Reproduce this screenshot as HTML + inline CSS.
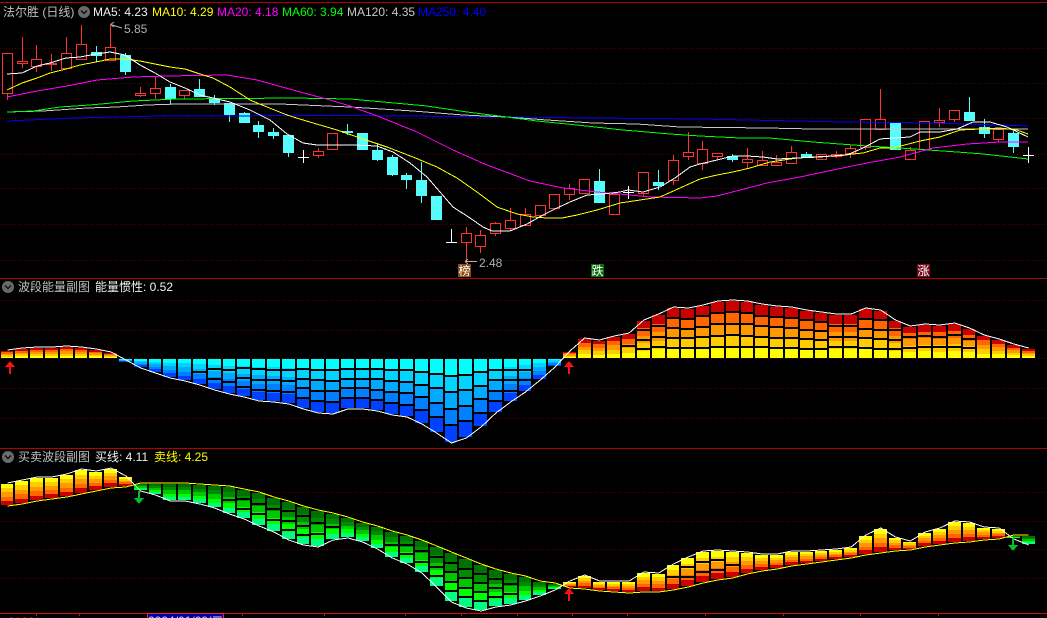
<!DOCTYPE html>
<html><head><meta charset="utf-8"><title>法尔胜</title>
<style>
html,body{margin:0;padding:0;background:#000;width:1047px;height:618px;overflow:hidden}
svg{display:block;position:absolute;left:0;top:0}
text{font-family:"Liberation Sans","Noto Sans CJK SC",sans-serif;font-size:12px}
</style></head><body>
<svg id="s" width="1047" height="618" viewBox="0 0 1047 618" xmlns="http://www.w3.org/2000/svg">
<g id="chart"></g>
<g>
<text x="3" y="16" fill="#c0c0c0">法尔胜 (日线)</text>
<circle cx="84" cy="12" r="6" fill="#6a6a6a"/><path d="M81 10.500L84 13.500L87 10.500" fill="none" stroke="#111" stroke-width="1.500"/>
<text x="93" y="16" fill="#f0f0f0">MA5: 4.23</text>
<text x="152" y="16" fill="#ffff00">MA10: 4.29</text>
<text x="217" y="16" fill="#ff00ff">MA20: 4.18</text>
<text x="282" y="16" fill="#00ff00">MA60: 3.94</text>
<text x="347" y="16" fill="#c8c8c8">MA120: 4.35</text>
<text x="418" y="16" fill="#0000ff">MA250: 4.40</text>
<text x="124" y="33" fill="#b0b0b0">5.85</text>
<path d="M110.500 24.500L122 28M110.500 24.500L114 22M110.500 24.500L114 27" fill="none" stroke="#b0b0b0"/>
<text x="479" y="267" fill="#b0b0b0">2.48</text>
<path d="M465 261.500L477 261.500M465 261.500L468 259M465 261.500L468 264" fill="none" stroke="#b0b0b0"/>
<rect x="458" y="264" width="13" height="13" fill="#8a4a10"/><text x="458.500" y="275" fill="#fff">榜</text>
<rect x="591" y="264" width="13" height="13" fill="#0a6a0a"/><text x="591.500" y="275" fill="#fff">跌</text>
<rect x="917" y="264" width="13" height="13" fill="#7a0a1a"/><text x="917.500" y="275" fill="#fff">涨</text>
<circle cx="8" cy="287" r="6" fill="#6a6a6a"/><path d="M5 285.500L8 288.500L11 285.500" fill="none" stroke="#111" stroke-width="1.500"/>
<text x="18" y="291" fill="#c0c0c0">波段能量副图</text>
<text x="95" y="291" fill="#f0f0f0">能量惯性: 0.52</text>
<circle cx="8" cy="457" r="6" fill="#6a6a6a"/><path d="M5 455.500L8 458.500L11 455.500" fill="none" stroke="#111" stroke-width="1.500"/>
<text x="18" y="461" fill="#c0c0c0">买卖波段副图</text>
<text x="95" y="461" fill="#f0f0f0">买线: 4.11</text>
<text x="154" y="461" fill="#ffff00">卖线: 4.25</text>
<rect x="147.500" y="613.500" width="76" height="8" fill="#0000a0" stroke="#ff2020"/>
<text x="148" y="625" fill="#d0d0ff">2024/01/09/二</text>
<text x="8" y="626" fill="#ff3030">2023/</text>
</g>
</svg>
<script>
var out=[];
function R(x,y,w,h,f){out.push('<rect x="'+x+'" y="'+y+'" width="'+w+'" height="'+h+'" fill="'+f+'"/>');}
function L(x1,y1,x2,y2,c){out.push('<line x1="'+x1+'" y1="'+y1+'" x2="'+x2+'" y2="'+y2+'" stroke="'+c+'"/>');}
function P(pts,c){out.push('<polyline points="'+pts+'" fill="none" stroke="'+c+'" stroke-width="1"/>');}
/* grids */
[48,83,118,154,188,224,260,300,330,358,388,418,492,521,549,578].forEach(function(y){
 out.push('<line x1="0" y1="'+(y+.5)+'" x2="1047" y2="'+(y+.5)+'" stroke="'+(y==83?'#3a1000':'#5a0000')+'" stroke-dasharray="1 2"/>');
});
[2,278,448].forEach(function(y){R(0,y,1047,1,'#b40000');});
R(0,613,1047,1,'#d01010');
[36,79,242,324,405,461,517,572,627,705,783,860,938].forEach(function(x){R(x,613,1,3,'#d01010');});
/* candles: type, top, bottom, wickTop, wickBot */
var c=[
'r',53,93,53,100,'r',61,63,37,68,'r',59,66,45,72,'r',63,64,54,71,'r',53,68,37,68,'r',44,59,25,59,'c',52,56,46,62,'r',47,60,25,60,
'c',55,72,53,75,'r',93,95,87,97,'r',88,93,77,99,'c',87,99,84,105,'r',90,95,90,99,'c',89,97,79,97,'c',99,103,95,105,'c',103,115,103,122,
'c',113,123,112,123,'c',125,132,121,138,'c',132,136,128,139,'c',135,153,135,157,'w',157,157,150,162,'r',151,155,148,158,'r',133,149,133,149,'c',131,133,124,135,
'c',133,150,133,150,'c',150,160,143,161,'c',157,175,155,176,'c',175,180,173,189,'c',180,196,162,203,'c',196,220,196,220,'w',242,242,229,242,'r',233,242,227,262,
'r',235,246,230,253,'r',223,233,222,236,'r',220,228,208,231,'r',214,225,208,225,'r',205,215,205,215,'r',194,208,194,208,'r',188,194,184,200,'r',179,193,179,193,
'c',181,203,169,203,'r',194,214,194,214,'w',192,192,186,198,'r',172,193,172,196,'c',182,186,170,190,'r',160,180,155,185,'r',152,156,132,160,'r',149,163,141,170,
'r',153,156,153,160,'c',156,160,154,162,'r',159,162,148,168,'r',160,165,151,165,'r',162,165,155,165,'r',152,163,146,164,'c',154,158,152,158,'r',154,159,154,159,
'r',154,156,151,158,'r',148,153,145,158,'r',119,147,119,150,'r',119,129,89,129,'c',123,150,123,150,'r',150,159,147,159,'r',121,149,121,149,'r',120,122,108,127,
'r',110,119,110,122,'c',112,121,97,121,'c',127,134,119,138,'r',129,139,129,142,'c',133,147,131,153,'w',155,155,147,162];
for(var i=0;i<70;i++){
 var k=i*5,t=c[k],x=Math.round(6.8+14.8*i),a=c[k+1],b=c[k+2],wt=c[k+3],wb=c[k+4];
 if(t=='w'){L(x+.5,wt,x+.5,wb+1,'#fff');R(x-5,a,11,1,'#fff');}
 else if(t=='c'){L(x+.5,wt,x+.5,wb,'#54fcfc');R(x-5,a,11,Math.max(b-a,1),'#54fcfc');}
 else{L(x+.5,wt,x+.5,wb,'#ff3232');R(x-5,a,11,b-a+1,'#ff3232');if(b-a>1)R(x-4,a+1,9,b-a-1,'#000');}
}
/* moving averages */
P('7,121 73,118 160,116 350,115.500 510,117 592,118 700,119 843,122 933,123 1028,126','#0000ff');
P('7,112 43,111 87,108 117,107 147,105 177,104 280,104 350,107 413,111 463,115 507,117 547,120 593,123 637,124 680,127 767,128 813,129 1028,129','#c8c8c8');
P('7,112 33,111 60,107 90,105 133,101 177,99 293,98 350,99 383,102 427,106 467,112 507,117 537,121 577,125 623,130 670,134 700,136 740,138 770,138 813,142 867,146 900,148 957,152 983,154 1028,159','#00ff00');
P('7,97 37,91 67,86 97,80 133,77 167,76 227,75 257,80 293,90 330,100 350,106 380,117 417,132 453,150 487,165 530,181 563,188 597,192 620,194 650,197 700,198 717,196 740,190 767,183 800,177 833,170 867,163 900,157 933,148 967,144 1000,142 1028,142','#ff00ff');
P('7,90 22,83 37,78 50,73 66,69 80,65 96,62 110,59 125,59 140,61 155,64 170,67 185,69 200,74 213,78 230,87 250,100 267,107 287,115 303,120 337,130 363,139 387,147 413,157 437,167 457,178 477,192 497,207 517,214 533,217 547,218 562,218 577,215 597,210 620,203 660,197 700,179 717,175 733,172 750,168 770,162 797,158 820,157 843,155 863,153 880,148 893,148 920,141 940,137 960,130 980,129 1000,128 1017,130 1028,134','#ffff00');
P('7,74 22,73 37,66 50,63 66,58 80,57 96,54 110,52 125,55 140,65 155,73 170,82 185,88 200,95 213,98 230,102 250,110 270,120 287,134 303,143 317,145 353,145 377,146 393,152 410,163 427,177 440,192 453,207 470,218 483,227 492,231 510,231 527,224 543,215 557,208 570,202 587,195 603,194 620,192 628,190 643,192 660,187 675,178 690,167 700,164 717,160 733,156 747,156 763,157 777,159 797,158 813,157 833,156 847,155 863,148 880,139 893,138 910,137 920,132 940,132 957,129 973,122 990,122 1007,127 1028,137','#ffffff');
/* bars */
var hot=['#c80000','#ff6600','#ff9900','#ffcc00','#ffff00'],hotR=hot.slice().reverse(),
 blue=['#00ffff','#00d4ff','#00aaff','#0080ff','#0040ff'],
 green=['#007000','#008c00','#00c800','#00ff00','#00ff80'];
function bar(i,a,b,pal){
 var x=Math.floor(1+14.8*i),w=Math.floor(1+14.8*(i+1))-x-2,h=b-a;
 for(var n=0;n<5;n++){
  var y1=Math.round(a+h*n/5),y2=Math.round(a+h*(n+1)/5);
  if(y2>y1)R(x,y1,w,y2-y1,pal[n]);
 }
 var cells=h<24?1:Math.min(5,Math.floor(h/9));
 for(var k=1;k<cells;k++){R(x,Math.round(a+h*k/cells)-1,w,2,'#000');}
}
/* panel 2 */
var p2=[351,349,348,348,347,348,350,353,0,367,372,377,380,384,389,393,396,400,401,403,408,412,413,408,408,410,414,416,423,432,442,437,426,412,401,391,379,366,352,339,341,337,334,321,315,308,309,306,302,301,302,305,307,308,311,313,315,315,309,311,321,327,325,326,324,329,336,340,345,349];
var l2=[];
for(i=0;i<70;i++){
 var v=p2[i],cx=(7.5+14.8*i).toFixed(1);
 if(i==8){bar(8,359,362,blue);l2.push(cx+',360');continue;}
 if(i<8||i>=38){bar(i,v,358,hot);l2.push(cx+','+(v-1));}
 else{bar(i,359,v,blue);l2.push(cx+','+(v+1));}
}
P(l2.join(' '),'#ffffff');
/* panel 3 */
var p3=[484,505,481,503,478,500,478,498,475,496,470,493,472,490,469,487,477,486,484,490,484,494,484,500,484,500,485,503,486,507,487,513,490,518,493,525,498,531,502,539,507,544,511,546,514,539,518,537,523,541,527,548,532,557,536,563,541,572,547,586,553,601,559,607,565,610,570,606,574,604,577,600,582,595,584,589,582,587,576,588,582,590,582,591,582,592,573,591,574,591,565,589,558,586,552,582,551,579,552,577,553,573,555,570,555,568,552,565,552,563,551,561,550,559,548,557,536,554,529,552,538,550,542,549,533,546,529,544,522,542,523,541,528,539,529,538,536,538,536,544];
var wl=[],yl=[];
for(i=0;i<70;i++){
 var a=p3[i*2],b=p3[i*2+1],cx=(7.5+14.8*i).toFixed(1),g=(i>=9&&i<=37)||i>=68;
 bar(i,a,b,g?green:hotR);
 if(g){wl.push(cx+','+(b+1));yl.push(cx+','+(a-1));}
 else{wl.push(cx+','+(a-1));yl.push(cx+','+(b+1));}
}
P(yl.join(' '),'#ffff00');
P(wl.join(' '),'#ffffff');
/* arrows */
function up(x,y,c){out.push('<path d="M'+x+' '+y+'L'+(x+5)+' '+(y+6)+'L'+(x+1)+' '+(y+6)+'L'+(x+1)+' '+(y+13)+'L'+(x-1)+' '+(y+13)+'L'+(x-1)+' '+(y+6)+'L'+(x-5)+' '+(y+6)+'Z" fill="'+c+'"/>');}
function dn(x,y,c){out.push('<path d="M'+x+' '+(y+13)+'L'+(x+5)+' '+(y+7)+'L'+(x+1)+' '+(y+7)+'L'+(x+1)+' '+y+'L'+(x-1)+' '+y+'L'+(x-1)+' '+(y+7)+'L'+(x-5)+' '+(y+7)+'Z" fill="'+c+'"/>');}
up(10,361,'#ff1010');up(569,361,'#ff1010');up(569,588,'#ff1010');
dn(139,491,'#00c030');dn(1013,538,'#00c030');
var g=document.getElementById('chart');
g.setAttribute('shape-rendering','crispEdges');
g.innerHTML=out.join('');
</script>
</body></html>
